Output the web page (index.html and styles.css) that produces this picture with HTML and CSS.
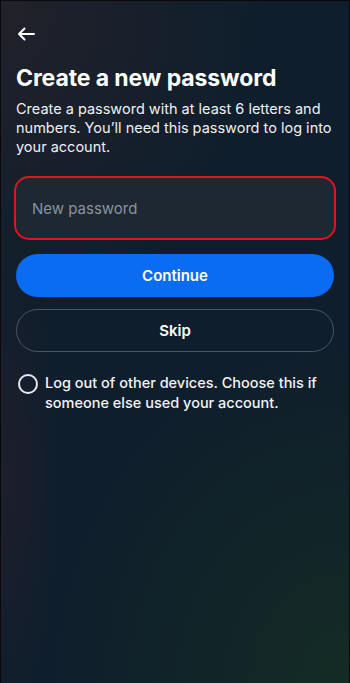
FILE: index.html
```html
<!DOCTYPE html>
<html lang="en">
<head>
<meta charset="utf-8">
<title>Create a new password</title>
<link rel="stylesheet" href="styles.css">
</head>
<body>
<div class="screen">
  <div class="topbar">
    <svg class="back" width="18" height="14" viewBox="0 0 18 14" aria-label="Back">
      <path d="M17 7H2M7.5 1.5L2 7l5.5 5.5" fill="none" stroke="#fff" stroke-width="2" stroke-linecap="round" stroke-linejoin="round"/>
    </svg>
  </div>
  <h1 class="title">Create a new password</h1>
  <p class="desc">Create a password with at least 6 letters and numbers. You’ll need this password to log into your account.</p>
  <div class="field">
    <span class="placeholder">New password</span>
  </div>
  <button class="btn primary">Continue</button>
  <button class="btn secondary">Skip</button>
  <label class="option">
    <span class="radio"></span>
    <span class="option-text">Log out of other devices. Choose this if someone else used your account.</span>
  </label>
</div>
</body>
</html>
```
FILE: styles.css
```css
* { box-sizing: border-box; }
html, body { margin: 0; padding: 0; }
body {
  width: 350px;
  height: 683px;
  overflow: hidden;
  font-family: Inter, Roboto, "Liberation Sans", sans-serif;
  color: #fff;
}
.screen {
  width: 350px;
  height: 683px;
  padding: 0 15px;
  border-left: 1px solid #0a0a0c;
  border-top: 1px solid #0a0a0c;
  border-right: 1px solid #0a0a0c;
  background:
    radial-gradient(ellipse 260px 320px at 0% 0%, rgba(36,34,42,0.9), rgba(36,34,42,0) 100%),
    radial-gradient(ellipse 60px 260px at 0% 70%, rgba(40,30,45,0.6), rgba(40,30,45,0) 100%),
    radial-gradient(ellipse 300px 340px at 100% 100%, rgba(20,44,36,0.95), rgba(20,44,36,0) 100%),
    #0f1e2c;
  display: flex;
  flex-direction: column;
}
.topbar {
  height: 52px;
  display: flex;
  align-items: center;
  padding-top: 13px;
}
.back { display: block; margin-left: 1px; }
.title {
  margin: 10px 0 0;
  font-size: 23px;
  font-weight: 700;
  line-height: 30px;
  letter-spacing: -0.1px;
}
.desc {
  margin: 6px 0 0;
  font-size: 14.5px;
  line-height: 19px;
  font-weight: 400;
  color: #eef0f3;
}
.field {
  margin: 20px -2px 0;
  height: 64px;
  border: 2.5px solid #e0141e;
  border-radius: 15px;
  background: #1d2833;
  display: flex;
  align-items: center;
  padding-left: 16px;
}
.placeholder {
  font-size: 15px;
  color: #8a939c;
}
.btn {
  width: 100%;
  height: 43px;
  border-radius: 22px;
  font-family: inherit;
  font-size: 15px;
  font-weight: 600;
  color: #fff;
  display: flex;
  align-items: center;
  justify-content: center;
  padding: 0;
}
.primary {
  margin-top: 14px;
  background: #0a6cf2;
  border: none;
}
.secondary {
  margin-top: 12px;
  background: transparent;
  border: 1px solid #4b5661;
}
.option {
  margin-top: 21px;
  display: flex;
  align-items: flex-start;
  gap: 7px;
}
.radio {
  flex: none;
  width: 20px;
  height: 20px;
  margin: 1px 0 0 2px;
  border: 2px solid #e8eaed;
  border-radius: 50%;
}
.option-text {
  font-size: 14.5px;
  line-height: 19.5px;
  font-weight: 500;
  color: #f2f4f6;
}
```
